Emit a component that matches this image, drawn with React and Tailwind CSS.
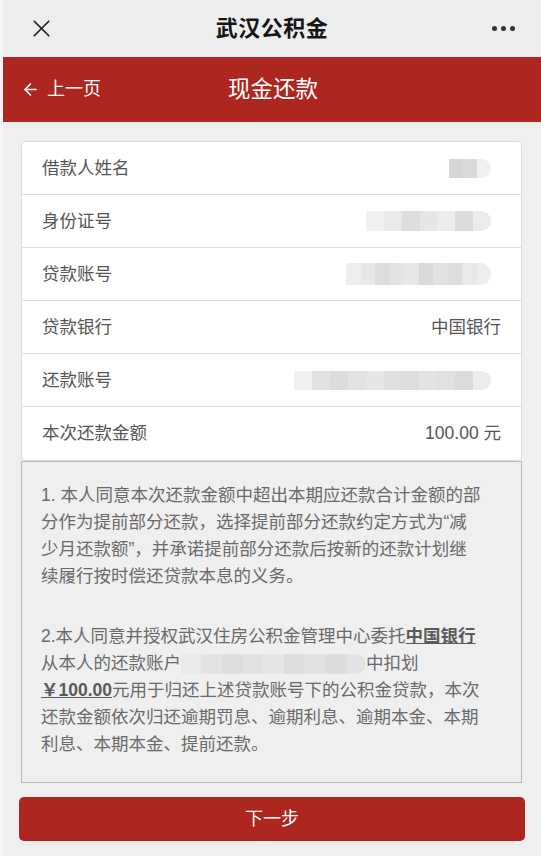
import { X, ArrowLeft } from "lucide-react";

const font = { fontFamily: '"Liberation Sans", "Noto Sans CJK SC", sans-serif' };

// mosaic-blurred placeholder for masked personal data
function Masked({ w, h = 20, cells }) {
  return (
    <span
      className="inline-flex overflow-hidden rounded-r-full blur-[0.6px] align-middle"
      style={{ width: w, height: h }}
    >
      {cells.map((c, i) => (
        <span key={i} className="flex-1 h-full" style={{ background: c }} />
      ))}
    </span>
  );
}

const rows = [
  { label: "借款人姓名", masked: true, value: <Masked w={42} h={19} cells={["#d6d6d6", "#dadada", "#f0f0f0"]} /> },
  {
    label: "身份证号",
    masked: true,
    value: <Masked w={125} cells={["#f0f0f0", "#e9e9e9", "#dedede", "#e6e6e6", "#ececec", "#dcdcdc", "#ebebeb"]} />,
  },
  {
    label: "贷款账号",
    masked: true,
    value: (
      <Masked
        w={145}
        h={22}
        cells={["#eeeeee", "#e8e8e8", "#dddddd", "#e4e4e4", "#e7e7e7", "#dadada", "#e2e2e2", "#dddddd", "#e9e9e9", "#eeeeee"]}
      />
    ),
  },
  { label: "贷款银行", value: "中国银行" },
  {
    label: "还款账号",
    masked: true,
    value: (
      <Masked
        w={197}
        h={19}
        cells={["#f0f0f0", "#e2e2e2", "#dcdcdc", "#e3e3e3", "#e6e6e6", "#e0e0e0", "#dddddd", "#e4e4e4", "#e1e1e1", "#dbdbdb", "#ececec"]}
      />
    ),
  },
  { label: "本次还款金额", value: "100.00 元" },
];

export default function App() {
  return (
    <div className="min-h-[856px] bg-[#efefef] border-l-[3px] border-[#f7f7f7]" style={font}>
      {/* WeChat title bar */}
      <div className="h-[57px] grid grid-cols-[1fr_auto_1fr] items-center bg-[#ededed]">
        <div className="pl-[24px]">
          <X className="w-[29px] h-[29px] text-[#222]" strokeWidth={1.4} />
        </div>
        <div className="text-[22px] font-semibold text-[#151515] tracking-[0.5px]">武汉公积金</div>
        <div className="flex justify-end items-center gap-[4px] pr-[26px]">
          <span className="w-[5px] h-[5px] rounded-full bg-[#333]" />
          <span className="w-[5px] h-[5px] rounded-full bg-[#333]" />
          <span className="w-[5px] h-[5px] rounded-full bg-[#333]" />
        </div>
      </div>

      {/* page header */}
      <div className="h-[65px] grid grid-cols-[1fr_auto_1fr] items-center bg-[#ad2620] text-white">
        <div className="flex items-center gap-[7px] pl-[18px] text-[18px]">
          <ArrowLeft className="w-[19px] h-[19px]" strokeWidth={2} />
          <span>上一页</span>
        </div>
        <div className="text-[22.5px] pl-[2px]">现金还款</div>
        <div />
      </div>

      <div className="pl-[18px] pr-[19px] pt-[19px]">
        <div className="bg-white border border-[#dcdcdc] rounded-[5px]">
          {rows.map((r, i) => (
            <div
              key={i}
              className={`h-[53px] flex items-center justify-between pl-[20px] pr-[20px] text-[17.5px] ${
                i < rows.length - 1 ? "border-b border-[#dedede]" : ""
              }`}
            >
              <span className="text-[#555]">{r.label}</span>
              <span className={r.masked ? "mr-[10px] flex" : "text-[#555]"}>{r.value}</span>
            </div>
          ))}
        </div>

        <div className="border border-[#b8b8b8] bg-[#efefef] pt-[20px] pb-[24px] pl-[19px]">
          <div className="w-[443px] text-[17.5px] leading-[27px] text-[#6a6a6a]">
            <p>
              1. 本人同意本次还款金额中超出本期应还款合计金额的部分作为提前部分还款，选择提前部分还款约定方式为“减少月还款额”，并承诺提前部分还款后按新的还款计划继续履行按时偿还贷款本息的义务。
            </p>
            <p className="mt-[33px]">
              2.本人同意并授权武汉住房公积金管理中心委托
              <span className="font-bold underline text-[#5a5a5a]">中国银行</span>
              从本人的还款账户
              <span className="underline">
                <Masked
                  w={185}
                  cells={["#e9e9e9", "#e3e3e3", "#dddddd", "#e2e2e2", "#e6e6e6", "#dedede", "#e1e1e1", "#dcdcdc", "#e4e4e4"]}
                />
              </span>
              中扣划
              <span className="font-bold underline text-[#5a5a5a]">￥100.00</span>
              元用于归还上述贷款账号下的公积金贷款，本次还款金额依次归还逾期罚息、逾期利息、逾期本金、本期利息、本期本金、提前还款。
            </p>
          </div>
        </div>
      </div>

      <div className="pl-[16px] pr-[16px] pt-[14px] pb-[16px]">
        <button className="w-full h-[44px] rounded-[5px] bg-[#ad2620] text-white text-[18px]">下一步</button>
      </div>
    </div>
  );
}
